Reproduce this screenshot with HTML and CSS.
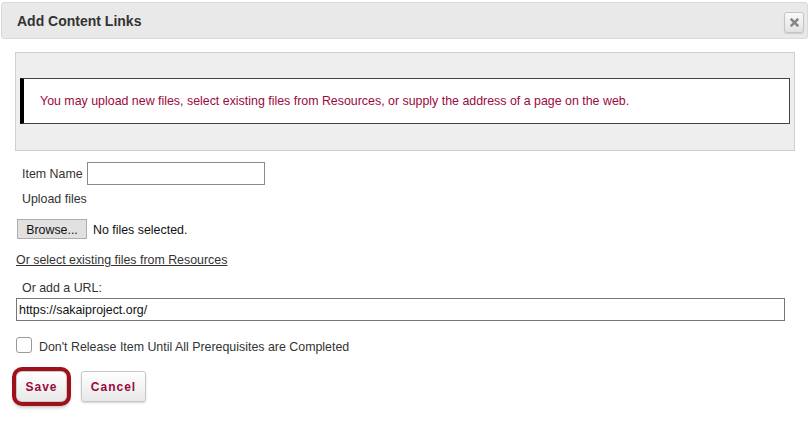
FILE: index.html
```html
<!DOCTYPE html>
<html>
<head>
<meta charset="utf-8">
<link rel="stylesheet" href="styles.css">
</head>
<body>
<div class="dialog">
  <div class="titlebar">
    <span class="title">Add Content Links</span>
    <button class="close" type="button" aria-label="Close">
      <svg width="9" height="9" viewBox="0 0 10 10"><path d="M1.8 1.8 L8.2 8.2 M8.2 1.8 L1.8 8.2" stroke="#858585" stroke-width="2.8" stroke-linecap="square"/></svg>
    </button>
  </div>
  <div class="content">
    <div class="panel">
      <div class="notice">You may upload new files, select existing files from Resources, or supply the address of a page on the web.</div>
    </div>
    <div class="form">
      <div class="row-name">
        <label class="lbl">Item Name</label>
        <input class="name-input" type="text">
      </div>
      <div class="lbl upload">Upload files</div>
      <div class="row-browse">
        <button class="browse" type="button">Browse...</button>
        <span class="nofiles">No files selected.</span>
      </div>
      <a class="reslink" href="#">Or select existing files from Resources</a>
      <div class="lbl urllbl">Or add a URL:</div>
      <input class="url-input" type="text" value="https://sakaiproject.org/">
      <div class="row-check">
        <input class="chk" type="checkbox">
        <span class="chklbl">Don't Release Item Until All Prerequisites are Completed</span>
      </div>
      <div class="row-buttons">
        <button class="btn save" type="button">Save</button>
        <button class="btn cancel" type="button">Cancel</button>
      </div>
    </div>
  </div>
</div>
</body>
</html>
```

FILE: styles.css
```css
* { box-sizing: border-box; }
html, body { margin: 0; padding: 0; background: #fff; }
body { font-family: "Liberation Sans", Arial, sans-serif; color: #333; font-size: 12.4px; }

.dialog { width: 811px; height: 421px; padding-top: 2px; }

.titlebar {
  margin: 0 3px 0 1px;
  height: 37px;
  background: #e9e9e9;
  border: 1px solid #dadada;
  border-radius: 3px;
  display: flex;
  align-items: center;
  justify-content: space-between;
  padding: 0 3px 0 15px;
}
.title { font-weight: bold; font-size: 14px; color: #333; }
.close {
  width: 20px; height: 21px;
  margin-top: 3px;
  padding: 0;
  border: 1px solid #c4c4c4;
  border-radius: 3px;
  background: linear-gradient(#fafafa, #e2e2e2);
  box-shadow: 0 1px 1px rgba(0,0,0,0.12);
  display: flex; align-items: center; justify-content: center;
}

.content { padding-left: 15px; }

.panel {
  margin-top: 13px;
  width: 780px;
  background: #eeeeee;
  border: 1px solid #cfcfcf;
  padding: 25px 4px 26px 4px;
}
.notice {
  height: 46px;
  background: #fff;
  border: 1px solid #444;
  border-left: 4px solid #000;
  padding-left: 16px;
  display: flex; align-items: center;
  color: #9b0a3c;
  font-size: 12.4px;
}

.form { padding-left: 1px; display: flex; flex-direction: column; align-items: flex-start; }
.lbl { color: #333; font-size: 12.4px; padding-left: 6px; }

.row-name { margin-top: 11px; height: 23px; display: flex; align-items: center; }
.row-name .lbl { width: 71px; }
.name-input { width: 178px; height: 23px; border: 1px solid #8a8a8a; margin: 0; padding: 0 3px; font: inherit; }

.upload { margin-top: 5px; line-height: 18px; }

.row-browse { margin-top: 11px; height: 20px; display: flex; align-items: center; padding-left: 1px; }
.browse {
  width: 70px; height: 20px; margin: 0; padding: 2px 0 0 0;
  background: #e1e1e1; border: 1px solid #adadad;
  font-family: inherit; font-size: 12.4px; color: #111;
}
.nofiles { margin-left: 6px; padding-top: 2px; color: #111; font-size: 12.4px; }

.reslink { margin-top: 13px; line-height: 16px; color: #333; text-decoration: underline; font-size: 12.4px; }

.urllbl { margin-top: 12px; line-height: 16px; }
.url-input {
  margin: 2px 0 0 0;
  width: 769px; height: 23px;
  border: 1px solid #767676;
  padding: 0 2px;
  font-family: inherit; font-size: 12.4px; color: #111;
}

.row-check { margin-top: 16px; height: 16px; display: flex; align-items: center; }
.chk {
  -webkit-appearance: none; appearance: none;
  width: 16px; height: 16px; margin: 0;
  border: 1px solid #9a9a9a; border-radius: 3px; background: #fff;
}
.chklbl { margin-left: 7px; padding-top: 3px; color: #333; font-size: 12.4px; }

.row-buttons { margin-top: 18px; display: flex; gap: 14px; padding-left: 0; }
.btn {
  height: 31px; margin: 0;
  border: 1px solid #c8c8c8; border-radius: 3px;
  background: linear-gradient(#ffffff, #e8e8e8);
  box-shadow: 0 1px 2px rgba(0,0,0,0.18);
  color: #990a3c; font-family: inherit; font-weight: bold; font-size: 12px; letter-spacing: 1px;
}
.save {
  width: 51px; padding: 0;
  outline: 4px solid #a0101a;
  outline-offset: 0;
  border-radius: 6px;
  box-shadow: 0 3px 4px 2px rgba(0,0,0,0.3);
}
.cancel { width: 65px; padding: 0; }
```
